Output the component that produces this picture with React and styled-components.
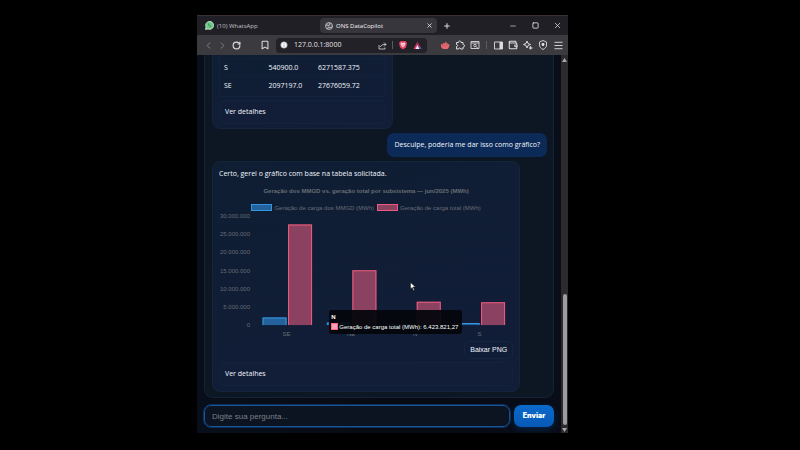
import React from "react";
import styled, { createGlobalStyle } from "styled-components";
import {
  ChevronLeft, ChevronRight, RotateCw, Bookmark, Info, X, Plus, Minus, Square, Wallet, Menu,
} from "lucide-react";

const GlobalStyle = createGlobalStyle`
  * { box-sizing: border-box; }
  body { margin: 0; background: #000; }
  button, input { font: inherit; }
`;

const ui = `"Open Sans", "Noto Sans", sans-serif`;
const arial = `"Liberation Sans", Arial, sans-serif`;

const Page = styled.div`
  min-height: 100vh;
  display: flex;
  padding: 15px 232px 17px 197px;
  background: #000;
  font: 7px/10px ${ui};
  color: #f2f6fd;
`;

const Browser = styled.div`
  flex: 1;
  min-width: 0;
  display: flex;
  flex-direction: column;
  overflow: hidden;
  background: #070c15;
`;

const TabBar = styled.div`
  display: flex;
  align-items: center;
  height: 20px;
  padding: 0 6px 0 8px;
  background: #201f25;
  border-top: 1px solid #3c3038;
  font-size: 6px;
  color: #d4d3d8;
`;

const Tab = styled.div`
  display: flex;
  align-items: center;
  gap: 3px;
  height: 15px;
  border-radius: 4px;
  white-space: nowrap;
  flex: ${(p) => (p.$active ? "0 0 117px" : "0 0 115px")};
  padding: ${(p) => (p.$active ? "0 3px 0 5px" : "0")};
  background: ${(p) => (p.$active ? "#37363c" : "transparent")};
  color: ${(p) => (p.$active ? "#f5f4f8" : "#c4c3c8")};
`;

const TabTitle = styled.span`
  flex: 1;
`;

const IconButton = styled.button`
  display: grid;
  place-items: center;
  flex: none;
  width: 10px;
  height: 10px;
  padding: 0;
  border: 0;
  background: none;
  color: ${(p) => (p.$dim ? "#85848a" : "#dddce1")};
  svg { display: block; }
`;

const NewTab = styled(IconButton)`
  margin-left: 5px;
`;

const WindowControls = styled.div`
  display: flex;
  gap: 12px;
  margin-left: auto;
`;

const Toolbar = styled.div`
  display: flex;
  align-items: center;
  height: 20px;
  padding: 0 5px 0 6px;
  background: #3b3a3f;
`;

const NavGroup = styled.div`
  display: flex;
  gap: 4px;
  margin-right: 19px;
`;

const AddressBar = styled.div`
  flex: 1;
  min-width: 0;
  display: flex;
  align-items: center;
  height: 15px;
  margin: 0 13px 0 6px;
  padding: 0 5px 0 3px;
  border-radius: 4px;
  background: #222127;
`;

const Address = styled.input`
  flex: 1;
  min-width: 0;
  width: 0;
  padding: 0;
  margin-left: 5px;
  border: 0;
  outline: 0;
  background: none;
  color: #e4e3e8;
`;

const AddressActions = styled.div`
  display: flex;
  align-items: center;
  gap: 4px;
`;

const Separator = styled.span`
  width: 1px;
  height: 8px;
  margin: 0 1px;
  background: #5d5c62;
`;

const Tools = styled.div`
  display: flex;
  align-items: center;
  gap: 5px;
`;

const Viewport = styled.div`
  flex: 1;
  display: flex;
  min-height: 0;
`;

const Main = styled.main`
  flex: 1;
  min-width: 0;
  display: flex;
  flex-direction: column;
  gap: 7px;
  padding: 0 7px 6px;
  background: linear-gradient(90deg, #090f1a, #060a12 60%, #080d18);
`;

const Conversation = styled.section`
  flex: 1;
  display: flex;
  flex-direction: column;
  align-items: flex-start;
  gap: 4px;
  padding: 0 6px 5px 7px;
  border: 1px solid #152338;
  border-top: 0;
  border-radius: 0 0 9px 9px;
  background: #0d1623;
`;

const Reply = styled.article`
  width: ${(p) => (p.$wide ? "92%" : "54%")};
  padding: ${(p) => (p.$wide ? "7px 6px 5px" : "0 6px 4px")};
  border: 1px solid #14243d;
  border-top-width: ${(p) => (p.$wide ? "1px" : "0")};
  border-radius: ${(p) => (p.$wide ? "8px" : "0 0 8px 8px")};
  background: linear-gradient(160deg, #0f1e33, #121d38);
`;

const TableFrame = styled.div`
  padding: 3px 0 1px;
  margin-bottom: 3px;
  border: 1px solid #13233a;
  border-top: 0;
`;

const Table = styled.table`
  width: 100%;
  border-collapse: collapse;
  table-layout: fixed;
`;

const Cell = styled.td`
  height: 18px;
  padding: 0 0 0 4px;
  width: ${(p) => p.$width || "auto"};
  border-top: 1px solid #12213a;
`;

const Details = styled.details`
  padding: 6px 5px;
  border: 1px solid #14223c;
  border-radius: 6px;
  background: #121e38;
`;

const Summary = styled.summary`
  list-style: none;
  line-height: 10px;
`;

const Question = styled.p`
  align-self: flex-end;
  margin: 0;
  padding: 7px 7px;
  border-radius: 7px;
  background: #0c2a57;
`;

const ReplyText = styled.p`
  margin: 0;
`;

const Figure = styled.figure`
  position: relative;
  margin: 0;
  padding-top: 8px;
  font: 6px/8px ${arial};
  color: #676c74;
`;

const ChartTitle = styled.figcaption`
  text-align: center;
  font-weight: bold;
`;

const Legend = styled.div`
  display: flex;
  justify-content: center;
  gap: 3px;
  margin-top: 9px;
`;

const LegendItem = styled.span`
  display: flex;
  align-items: center;
  gap: 2px;
  white-space: nowrap;
`;

const Swatch = styled.span`
  width: 21px;
  height: 7px;
  border: 1px solid ${(p) => p.$line};
  background: ${(p) => p.$fill};
`;

const Plot = styled.svg`
  display: block;
  width: 100%;
  font: 6px ${arial};
`;

const Tooltip = styled.div`
  position: absolute;
  left: 37.5%;
  bottom: 6px;
  padding: 2px 4px 2px 2px;
  border-radius: 3px;
  background: rgba(3, 5, 10, 0.93);
  color: #fff;
  line-height: 10px;
  white-space: nowrap;
`;

const TooltipRow = styled.div`
  display: flex;
  align-items: center;
  gap: 1px;
`;

const TooltipKey = styled.span`
  width: 7px;
  height: 7px;
  border: 1px solid #ff6384;
  background: #ffa1b5;
`;

const Pointer = styled.svg`
  position: absolute;
  left: 65%;
  top: 103px;
`;

const Download = styled.button`
  display: block;
  margin: 1px 0 3px auto;
  padding: 3px 5px;
  border: 1px solid #13253f;
  border-radius: 5px;
  background: none;
  color: #f2f6fd;
  font: 7px/10px ${arial};
`;

const Composer = styled.form`
  display: flex;
  gap: 4px;
`;

const Prompt = styled.input`
  flex: 1;
  min-width: 0;
  height: 22px;
  padding: 0 7px;
  border: 1px solid #17549a;
  border-radius: 7px;
  outline: 1px solid #0e315c;
  background: #0c1421;
  color: #e3eaf5;
  font: 8px/10px ${arial};
  &::placeholder { color: #7b8089; opacity: 1; }
`;

const Send = styled.button`
  width: 40px;
  padding: 0;
  border: 0;
  border-radius: 7px;
  background: linear-gradient(#0a6acb, #0759b6);
  box-shadow: 0 2px 6px #07254c;
  color: #fff;
  font: 900 7px/10px Inter, sans-serif;
`;

const ScrollTrack = styled.div`
  display: flex;
  flex-direction: column;
  align-items: center;
  justify-content: space-between;
  width: 7px;
  padding: 3px 0 1px;
  background: #2b2b2e;
`;

const ScrollThumb = styled.div`
  width: 4px;
  height: 35%;
  margin-top: auto;
  margin-bottom: 3px;
  border-radius: 2px;
  background: #9d9da0;
`;

const series = {
  mmgd: { label: "Geração de carga dos MMGD (MWh)", line: "#3396e2", fill: "#23629a" },
  total: { label: "Geração de carga total (MWh)", line: "#ee5a7d", fill: "#8a4260" },
};

const chart = [
  { name: "SE", mmgd: 2097197, total: 27676059 },
  { name: "NE", mmgd: 700000, total: 15050000 },
  { name: "N", mmgd: 250000, total: 6423821 },
  { name: "S", mmgd: 540900, total: 6271587 },
];

const ticks = [30, 25, 20, 15, 10, 5, 0];
const zeroY = 113;
const scale = 109 / 30000000;

function Bar({ x, value, kind }) {
  const h = value * scale;
  return (
    <g>
      <rect x={x} y={zeroY - h} width="24" height={h} fill={kind.fill} />
      <path d={`M${x + 0.5} ${zeroY}V${zeroY - h + 0.5}H${x + 23.5}V${zeroY}`} fill="none" stroke={kind.line} />
    </g>
  );
}

function BarChart() {
  return (
    <Plot viewBox="0 0 294 128" role="img" aria-label="Geração por subsistema">
      {ticks.map((t) => (
        <g key={t}>
          <path d={`M34 ${zeroY - t * 1000000 * scale}H290`} stroke="#11203a" />
          <text x="31" y={zeroY + 2 - t * 1000000 * scale} textAnchor="end" fill="#676c74">
            {t ? `${t}.000.000` : "0"}
          </text>
        </g>
      ))}
      {chart.map((c, i) => {
        const x = 43.5 + i * 64.3;
        return (
          <g key={c.name}>
            <Bar x={x} value={c.mmgd} kind={series.mmgd} />
            <Bar x={x + 25.5} value={c.total} kind={series.total} />
            <text x={x + 24} y={zeroY + 11} textAnchor="middle" fill="#676c74">{c.name}</text>
          </g>
        );
      })}
    </Plot>
  );
}

const WhatsAppMark = () => (
  <svg width="9" height="9" viewBox="0 0 18 18" aria-hidden="true">
    <path d="M1 17l1-5a8 8 0 1 1 4 4z" fill="#6fcb8a" stroke="#d9eedf" strokeWidth="1.5" />
    <path d="M6 5c-1 3 3 7 6 7l1-2-2-1-1 1-2-2 1-1-1-2z" fill="#3f8f5a" />
  </svg>
);

const GlobeMark = () => (
  <svg width="8" height="8" viewBox="0 0 16 16" aria-hidden="true">
    <circle cx="8" cy="8" r="7" fill="#55545a" stroke="#c9c8cd" strokeWidth="1.6" />
    <path d="M2 6c3-1 4 2 6 1s0-3 2-5M5 14c0-3 3-4 5-3s3-1 5-2" fill="none" stroke="#c9c8cd" strokeWidth="2" />
  </svg>
);

const LionShield = () => (
  <svg width="10" height="10" viewBox="0 0 20 20" aria-hidden="true">
    <path d="M5 2h10l3 4-2 9-6 4-6-4-2-9z" fill="#e5405e" />
    <path d="M6 5l4 1 4-1 1 3-2 4-3 3-3-3-2-4z" fill="#f6dce0" />
    <path d="M7 8l2 1m4-1l-2 1m-1 1v3" stroke="#e5405e" fill="none" />
  </svg>
);

const Triangle = () => (
  <svg width="9" height="9" viewBox="0 0 18 18" aria-hidden="true">
    <path d="M9 1L1 16h8V9z" fill="#d8365b" />
    <path d="M9 1v8l4 7h4z" fill="#a83262" />
    <path d="M9 8l-4 8h8z" fill="#f2eef5" />
    <path d="M13 16l-2-4h4l2 4z" fill="#4c55c8" />
  </svg>
);

const RedCreature = () => (
  <svg width="10" height="10" viewBox="0 0 20 20" aria-hidden="true">
    <path d="M2 8l3 1 1-3 4 1 1-4 3 3 2 2 3 1-1 5-3 4H6l-4-4z" fill="#e36870" />
    <path d="M5 11h3m3-1h3" stroke="#b23f4e" strokeWidth="1.5" />
  </svg>
);

const Arrow = ({ down }) => (
  <svg width="5" height="4" viewBox="0 0 5 4" aria-hidden="true">
    <path d={down ? "M0 0h5L2.5 4z" : "M0 4h5L2.5 0z"} fill="#a7a7aa" />
  </svg>
);

const rows = [
  ["S", "540900.0", "6271587.375"],
  ["SE", "2097197.0", "27676059.72"],
];

export default function App() {
  return (
    <Page>
      <GlobalStyle />
      <Browser>
        <TabBar>
          <Tab>
            <WhatsAppMark />
            <TabTitle>(10) WhatsApp</TabTitle>
          </Tab>
          <Tab $active>
            <GlobeMark />
            <TabTitle>ONS DataCopilot</TabTitle>
            <IconButton aria-label="Fechar aba"><X size={7} strokeWidth={3} /></IconButton>
          </Tab>
          <NewTab aria-label="Nova aba"><Plus size={8} strokeWidth={3} /></NewTab>
          <WindowControls>
            <IconButton aria-label="Minimizar"><Minus size={8} /></IconButton>
            <IconButton aria-label="Maximizar"><Square size={7} strokeWidth={3} /></IconButton>
            <IconButton aria-label="Fechar"><X size={9} /></IconButton>
          </WindowControls>
        </TabBar>
        <Toolbar>
          <NavGroup>
            <IconButton $dim aria-label="Voltar"><ChevronLeft size={11} /></IconButton>
            <IconButton $dim aria-label="Avançar"><ChevronRight size={11} /></IconButton>
            <IconButton aria-label="Recarregar"><RotateCw size={9} strokeWidth={3} /></IconButton>
          </NavGroup>
          <IconButton aria-label="Favoritos"><Bookmark size={10} strokeWidth={2.5} /></IconButton>
          <AddressBar>
            <IconButton aria-label="Informações do site"><Info size={8} fill="#fff" stroke="#77767c" /></IconButton>
            <Address aria-label="Endereço" defaultValue="127.0.0.1:8000" />
            <AddressActions>
              <IconButton aria-label="Compartilhar">
                <svg width="9" height="9" viewBox="0 0 18 18" fill="none" stroke="currentColor" strokeWidth="1.6">
                  <path d="M2 8v8h12v-3M12 3l4 4-4 4M16 7h-4c-4 0-6 2-7 5" />
                </svg>
              </IconButton>
              <Separator />
              <IconButton aria-label="Proteções"><LionShield /></IconButton>
              <IconButton aria-label="Recompensas"><Triangle /></IconButton>
            </AddressActions>
          </AddressBar>
          <Tools>
            <IconButton aria-label="Extensão"><RedCreature /></IconButton>
            <IconButton aria-label="Extensões">
              <svg width="10" height="10" viewBox="0 0 20 20" fill="none" stroke="currentColor" strokeWidth="2">
                <path d="M3 5h4c-1-4 6-4 5 0h4v4c4-1 4 6 0 5v4h-5c0-3-4-3-4 0H3v-5c3 0 3-4 0-4z" />
              </svg>
            </IconButton>
            <IconButton aria-label="Pesquisar abas">
              <svg width="10" height="10" viewBox="0 0 20 20" fill="none" stroke="currentColor" strokeWidth="1.8">
                <path d="M2 3h16v14H2zM2 6h16" /><circle cx="10" cy="11" r="2.5" /><path d="M12 13l3 3" />
              </svg>
            </IconButton>
            <Separator />
            <IconButton aria-label="Barra lateral">
              <svg width="9" height="9" viewBox="0 0 18 18">
                <path d="M1 2h16v14H1z" fill="none" stroke="currentColor" strokeWidth="1.8" />
                <path d="M11 2h6v14h-6z" fill="currentColor" />
              </svg>
            </IconButton>
            <IconButton aria-label="Carteira"><Wallet size={10} strokeWidth={2.5} /></IconButton>
            <IconButton aria-label="Assistente">
              <svg width="10" height="10" viewBox="0 0 20 20" fill="none" stroke="currentColor" strokeWidth="2">
                <path d="M8 2l2 5 5 2-5 2-2 5-2-5-5-2 5-2z" /><path d="M15 12l1 3 3 1-3 1-1 2-1-2-2-1 2-1z" fill="currentColor" strokeWidth="1" />
              </svg>
            </IconButton>
            <IconButton aria-label="VPN">
              <svg width="10" height="10" viewBox="0 0 20 20" fill="none" stroke="currentColor" strokeWidth="1.8">
                <path d="M10 1l7 3v6c0 4-3 7-7 9-4-2-7-5-7-9V4z" /><path d="M8 7h4v3l-2 2-2-2z" fill="currentColor" />
              </svg>
            </IconButton>
            <IconButton aria-label="Menu"><Menu size={11} /></IconButton>
          </Tools>
        </Toolbar>
        <Viewport>
          <Main>
            <Conversation>
              <Reply>
                <TableFrame>
                  <Table>
                    <tbody>
                      {rows.map((r) => (
                        <tr key={r[0]}>
                          <Cell $width="27%">{r[0]}</Cell>
                          <Cell $width="30%">{r[1]}</Cell>
                          <Cell>{r[2]}</Cell>
                        </tr>
                      ))}
                    </tbody>
                  </Table>
                </TableFrame>
                <Details><Summary>Ver detalhes</Summary></Details>
              </Reply>
              <Question>Desculpe, poderia me dar isso como gráfico?</Question>
              <Reply $wide>
                <ReplyText>Certo, gerei o gráfico com base na tabela solicitada.</ReplyText>
                <Figure>
                  <ChartTitle>Geração dos MMGD vs. geração total por subsistema — jun/2025 (MWh)</ChartTitle>
                  <Legend>
                    {Object.values(series).map((s) => (
                      <LegendItem key={s.label}>
                        <Swatch $line={s.line} $fill={s.fill} />
                        {s.label}
                      </LegendItem>
                    ))}
                  </Legend>
                  <BarChart />
                  <Tooltip role="tooltip">
                    <b>N</b>
                    <TooltipRow><TooltipKey />Geração de carga total (MWh): 6.423.821,27</TooltipRow>
                  </Tooltip>
                  <Pointer width="6" height="9" viewBox="0 0 12 18" aria-hidden="true">
                    <path d="M1 1v13l3-3 3 6 2-1-3-6h5z" fill="#fff" stroke="#111" />
                  </Pointer>
                </Figure>
                <Download>Baixar PNG</Download>
                <Details><Summary>Ver detalhes</Summary></Details>
              </Reply>
            </Conversation>
            <Composer onSubmit={(e) => e.preventDefault()}>
              <Prompt aria-label="Pergunta" placeholder="Digite sua pergunta..." />
              <Send>Enviar</Send>
            </Composer>
          </Main>
          <ScrollTrack>
            <Arrow />
            <ScrollThumb />
            <Arrow down />
          </ScrollTrack>
        </Viewport>
      </Browser>
    </Page>
  );
}
